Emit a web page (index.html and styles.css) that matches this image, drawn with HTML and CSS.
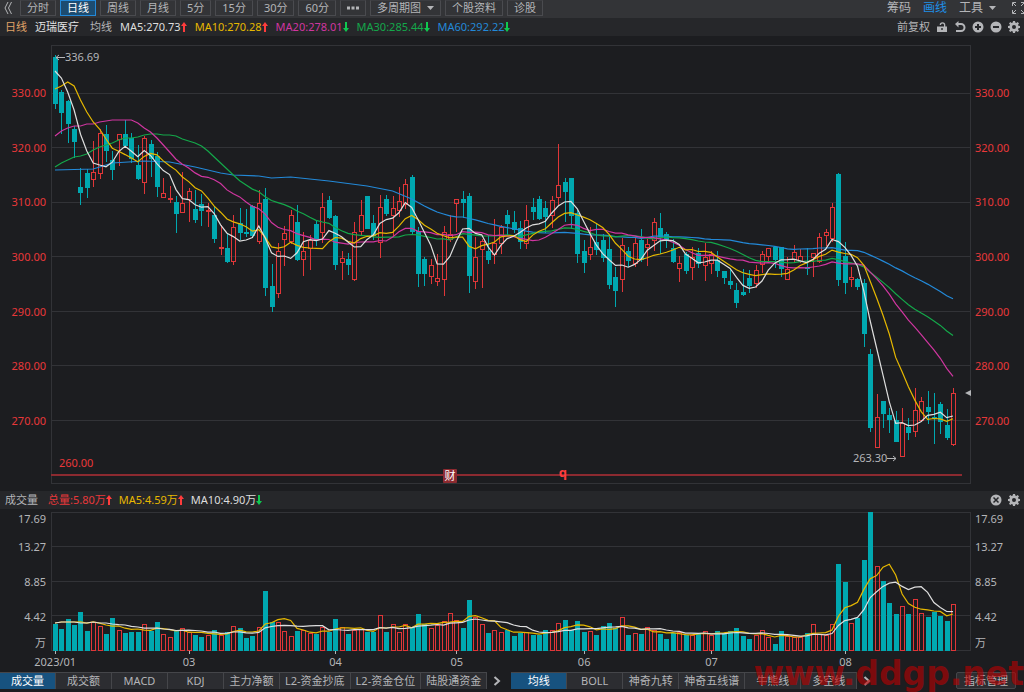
FILE: index.html
```html
<!DOCTYPE html>
<html lang="zh-CN">
<head>
<meta charset="utf-8">
<meta name="viewport" content="width=device-width, initial-scale=1">
<title>迈瑞医疗 日线</title>
<link rel="stylesheet" href="styles.css">
</head>
<body>
<svg class="defs" aria-hidden="true">
  <symbol id="gear" viewBox="0 0 12 12"><path fill-rule="evenodd" d="M5 0h2l.3 1.6 1 .4L9.700 1.100 11 2.400l-1 1.300.4 1L12 5v2l-1.600.3-.4 1 1 1.400L9.700 11l-1.400-1-1 .4L7 12H5l-.3-1.600-1-.4L2.300 11 1 9.700l1-1.400-.4-1L0 7V5l1.600-.3.4-1L1 2.400 2.300 1.100 3.700 2l1-.4zM6 4a2 2 0 1 0 0 4 2 2 0 0 0 0-4z"/></symbol>
  <symbol id="up" viewBox="0 0 6 10"><path d="M3 0 6 4H4v6H2V4H0z"/></symbol>
  <symbol id="down" viewBox="0 0 6 10"><path d="M3 10 6 6H4V0H2v6H0z"/></symbol>
  <symbol id="next" viewBox="0 0 8 10"><path d="M1.500 1 6 5 1.500 9" fill="none" stroke="currentColor" stroke-width="2"/></symbol>
</svg>

<header class="toolbar">
  <button class="back" aria-label="收起"><svg width="8" height="12" viewBox="0 0 8 12"><path d="M4 0 1 6l3 6M7.500 0l-3 6 3 6" fill="none" stroke="currentColor"/></svg></button>
  <nav class="periods">
    <button>分时</button>
    <button class="active">日线</button>
    <button>周线</button>
    <button>月线</button>
    <button>5分</button>
    <button>15分</button>
    <button>30分</button>
    <button>60分</button>
    <button aria-label="更多"><svg width="12" height="4" viewBox="0 0 12 4"><path d="M0 .5h3v3H0zM4.500.5h3v3h-3zM9 .5h3v3H9z"/></svg></button>
    <button>多周期图<svg class="caret" width="7" height="4" viewBox="0 0 7 4"><path d="M0 0h7L3.500 4z"/></svg></button>
    <button>个股资料</button>
    <button>诊股</button>
  </nav>
  <div class="tools">
    <button>筹码</button>
    <button class="on">画线</button>
    <button>工具<svg class="caret" width="7" height="4" viewBox="0 0 7 4"><path d="M0 0h7L3.500 4z"/></svg></button>
    <button aria-label="全屏"><svg width="12" height="14" viewBox="0 0 12 14"><path d="M.5 5V1.500H4M1 2l3 3M9 1.500h3.500V5M12 2 9 5M.5 9v3.500H4M1 12l3-3M9 12.500h3.500V9M12 12 9 9" fill="none" stroke="currentColor"/></svg></button>
  </div>
</header>

<section class="legend">
  <span class="orange">日线</span>
  <strong>迈瑞医疗</strong>
  <span class="label">均线</span>
  <span class="white">MA5:270.73<svg class="arrow red"><use href="#up"/></svg></span>
  <span class="yellow">MA10:270.28<svg class="arrow red"><use href="#up"/></svg></span>
  <span class="pink">MA20:278.01<svg class="arrow lime"><use href="#down"/></svg></span>
  <span class="green">MA30:285.44<svg class="arrow lime"><use href="#down"/></svg></span>
  <span class="blue">MA60:292.22<svg class="arrow lime"><use href="#down"/></svg></span>
  <div class="actions">
    <button>前复权</button>
    <button aria-label="锁定"><svg width="12" height="12" viewBox="0 0 12 12"><path fill-rule="evenodd" d="M1 5.500h7V4a1.500 1.500 0 0 0-3 0H3.700a2.800 2.800 0 0 1 5.600 0v1.500H11V11H1zM5.300 7v2h1.400V7z"/></svg></button>
    <button aria-label="撤销"><svg width="12" height="12" viewBox="0 0 12 12"><path d="M4.500 0v2H7a4.500 4.500 0 0 1 0 9H2V9h5a2.500 2.500 0 0 0 0-5H4.500v2.500L1 3z"/></svg></button>
    <button aria-label="放大"><svg width="12" height="12" viewBox="0 0 12 12"><circle cx="6" cy="6" r="5.500"/><path class="cut" d="M6 3v6M3 6h6"/></svg></button>
    <button aria-label="缩小"><svg width="12" height="12" viewBox="0 0 12 12"><circle cx="6" cy="6" r="5.500"/><path class="cut" d="M3 6h6"/></svg></button>
    <button aria-label="设置"><svg width="12" height="12"><use href="#gear"/></svg></button>
  </div>
</section>

<main class="chart price">
  <ol class="axis left">
    <li>330.00</li><li>320.00</li><li>310.00</li><li>300.00</li><li>290.00</li><li>280.00</li><li>270.00</li>
  </ol>
  <div class="plot">
    <svg id="price" viewBox="51 45 920 439" preserveAspectRatio="none" role="img" aria-label="日K线图"></svg>
    <span class="mark high"><svg width="10" height="7" viewBox="0 0 10 7"><path d="M10 3.500H1M4 1 1 3.500 4 6" fill="none" stroke="currentColor"/></svg>336.69</span>
    <span class="mark low">263.30<svg width="10" height="7" viewBox="0 0 10 7"><path d="M0 3.500h9M6 1l3 2.500L6 6" fill="none" stroke="currentColor"/></svg></span>
    <span class="mark base">260.00</span>
    <span class="mark report">财</span>
    <span class="mark event">q</span>
    <svg class="mark last" width="6" height="6" viewBox="0 0 6 6"><path d="M6 0v6L0 3z"/></svg>
  </div>
  <ol class="axis right">
    <li>330.00</li><li>320.00</li><li>310.00</li><li>300.00</li><li>290.00</li><li>280.00</li><li>270.00</li>
  </ol>
</main>

<section class="legend volume-legend">
  <span class="label">成交量</span>
  <span class="red">总量:5.80万<svg class="arrow red"><use href="#up"/></svg></span>
  <span class="yellow">MA5:4.59万<svg class="arrow red"><use href="#up"/></svg></span>
  <span class="white">MA10:4.90万<svg class="arrow lime"><use href="#down"/></svg></span>
  <div class="actions">
    <button aria-label="关闭"><svg width="12" height="12" viewBox="0 0 12 12"><circle cx="6" cy="6" r="5.500"/><path class="cut thin" d="m3.500 3.500 5 5M8.500 3.500l-5 5"/></svg></button>
    <button aria-label="设置"><svg width="12" height="12"><use href="#gear"/></svg></button>
  </div>
</section>

<section class="chart volume">
  <ol class="axis left"><li>17.69</li><li>13.27</li><li>8.85</li><li>4.42</li><li>万</li></ol>
  <div class="plot"><svg id="volume" viewBox="51 512 920 139" preserveAspectRatio="none" role="img" aria-label="成交量"></svg></div>
  <ol class="axis right"><li>17.69</li><li>13.27</li><li>8.85</li><li>4.42</li><li>万</li></ol>
</section>
<div class="dates" id="dates"></div>

<footer class="tabs">
  <nav class="group">
    <button class="active">成交量</button>
    <button>成交额</button>
    <button>MACD</button>
    <button>KDJ</button>
    <button>主力净额</button>
    <button>L2-资金抄底</button>
    <button>L2-资金仓位</button>
    <button>陆股通资金</button>
  </nav>
  <button class="more" aria-label="更多副图指标"><svg width="8" height="10"><use href="#next"/></svg></button>
  <nav class="group">
    <button class="active">均线</button>
    <button>BOLL</button>
    <button>神奇九转</button>
    <button>神奇五线谱</button>
    <button>牛熊线</button>
    <button>多空线</button>
  </nav>
  <button class="more" aria-label="更多主图指标"><svg width="8" height="10"><use href="#next"/></svg></button>
  <button class="manage">指标管理</button>
</footer>
<div class="watermark">www.ddgp.net</div>
<script src="chart.js"></script>
</body>
</html>
```

FILE: styles.css
```css
* { box-sizing: border-box; }

body {
  margin: 0;
  height: 100vh;
  min-height: 480px;
  display: flex;
  flex-direction: column;
  position: relative;
  overflow: hidden;
  background: #1c1d20;
  color: #b4b5b8;
  font: 11px/16px "Noto Sans", "Noto Sans CJK SC", sans-serif;
}

button {
  margin: 0;
  padding: 0;
  border: 0;
  background: none;
  color: inherit;
  font: inherit;
  white-space: nowrap;
  display: flex;
  align-items: center;
  justify-content: center;
}

svg { display: block; fill: currentColor; flex: none; }
.defs { position: absolute; width: 0; height: 0; }

.toolbar {
  flex: none;
  height: 18px;
  display: flex;
  align-items: flex-start;
  background: #333437;
}
.back { width: 16px; height: 16px; }
.periods { display: flex; gap: 4px; padding-left: 4px; }
.periods button {
  height: 16px;
  padding: 0 6px;
  border: 1px solid #4a4b4f;
  border-top-color: #3c3d41;
}
.periods .active { background: #1d4c70; border-color: #2389d8; color: #fff; }
.caret { margin-left: 6px; }
.tools { margin-left: auto; display: flex; gap: 12px; font-size: 12px; }
.tools button { height: 16px; }
.tools .on { color: #1e90e8; }
.tools button:last-child { margin-left: 4px; }

.legend {
  flex: none;
  height: 18px;
  display: flex;
  align-items: center;
  gap: 8px;
  padding: 0 4px 0 5px;
  background: #26272a;
  white-space: nowrap;
}
.legend > span { display: flex; align-items: center; }
.legend strong { font-weight: 400; color: #e4e4e6; }
.legend strong + .label { margin-left: 3px; }
.arrow { width: 6px; height: 10px; }
.actions { margin-left: auto; display: flex; gap: 6px; }
.cut { fill: none; stroke: #26272a; stroke-width: 2; }
.thin { stroke-width: 1.5; }
.volume-legend { gap: 7px; }
.volume-legend .label { margin-right: 3px; }

.orange { color: #e0a468; }
.white { color: #dedede; }
.yellow { color: #e6b800; }
.pink { color: #d036a0; }
.green { color: #14a84a; }
.blue { color: #2389d8; }
.red { color: #e8383a; }
.arrow.red { color: #ff3c3c; }
.lime { color: #10c850; }

.chart {
  display: grid;
  grid-template-columns: 51px minmax(0, 1fr) 53px;
  min-height: 0;
}
.price { flex: 439 1 0; margin: 9px 0 7px; }
.volume { flex: 139 1 0; margin-top: 3px; }
.plot { position: relative; min-height: 0; }
.plot > svg:first-child { width: 100%; height: 100%; }

.axis { margin: 0; padding: 0; list-style: none; display: grid; min-height: 0; }
.axis li { display: flex; align-items: center; min-height: 0; }
.left li { justify-content: flex-end; padding-right: 5px; }
.right li { padding-left: 4px; }
.price .axis { grid-template-rows: 21fr repeat(7, 55fr) 36fr; color: #e8383a; }
.price .axis::before { content: ""; }
.volume .axis { grid-template-rows: 17fr 35fr 35fr 35fr 17fr; }
.volume .axis li:first-child { align-items: flex-start; line-height: 14px; }

#price *, #volume * { vector-effect: non-scaling-stroke; }
.grid { stroke: #323337; fill: none; shape-rendering: crispEdges; }
.rise { stroke: #e03638; fill: none; shape-rendering: crispEdges; }
.fall { stroke: #00a8b0; fill: #00a8b0; shape-rendering: crispEdges; }
.baseline { stroke: #8c2a30; stroke-width: 2; }
.line { fill: none; stroke: currentColor; stroke-width: 1.2; }

.mark { position: absolute; display: flex; align-items: center; line-height: 14px; }
.high { left: 4px; top: 1.200%; }
.low { right: 8%; top: 92.500%; }
.base { left: 8px; top: 93.600%; color: #e8383a; }
.report {
  left: 42.600%;
  top: 96.600%;
  width: 14px;
  justify-content: center;
  background: #8c2a30;
  color: #fff;
  border-radius: 1px;
}
.event { left: 55.200%; top: 95.600%; color: #ff3c3c; font-size: 13px; font-weight: 700; }
.last { right: 0; top: 78.500%; }

.dates {
  flex: none;
  height: 21px;
  display: grid;
  padding: 0 67px 0 52px;
}
.dates span { display: flex; flex-direction: column; align-items: center; min-width: 0; white-space: nowrap; }
.dates span::before { content: ""; width: 1px; height: 3px; flex: none; background: #b4b5b8; }

.tabs {
  flex: none;
  height: 17px;
  margin-bottom: 3px;
  display: flex;
  background: #1c1d20;
}
.tabs button { height: 17px; }
.group { display: flex; border-top: 1px solid #45464a; }
.group button {
  min-width: 56px;
  height: 16px;
  padding: 0 5px;
  background: #2c2d31;
  border-right: 1px solid #45464a;
}
.group .active { background: #17527f; color: #fff; }
.tabs .more { width: 24px; padding-right: 4px; }
.tabs .manage {
  margin: 0 8px 0 auto;
  padding: 0 7px;
  background: #2c2d31;
  border: 1px solid #45464a;
  border-radius: 2px;
}

.watermark {
  position: absolute;
  right: 0;
  bottom: 0;
  color: rgba(190, 0, 0, .6);
  font: 700 33px/36px "DejaVu Sans", sans-serif;
  pointer-events: none;
}
```

FILE: chart.js
```js
// Each session: direction (1 = rise, 0 = fall), high, body top, body bottom, low, volume top.
const sessions = [
  [0,55,57,103,108,624],[0,90,92,112,133,629],[0,100,101,123,142,619],[0,126,129,141,157,625],
  [0,168,187,192,204,612],[0,169,173,187,197,631],[1,141,172,179,186,622],[1,129,133,173,178,626],
  [0,125,134,150,161,634],[0,151,160,169,179,618],[1,134,134,139,165,630],[0,120,134,145,147,633],
  [0,133,138,158,162,632],[0,145,165,178,179,632],[1,136,138,182,193,624],[0,140,144,158,176,631],
  [0,152,156,186,196,622],[1,178,193,197,197,634],[1,186,198,199,202,637],[0,196,202,213,232,630],
  [1,172,203,212,212,628],[1,188,191,199,221,632],[0,190,209,219,222,635],[0,194,204,210,225,637],
  [1,203,210,211,226,635],[0,207,215,238,242,630],[1,225,247,248,254,635],[0,233,248,261,262,632],
  [1,215,227,261,264,626],[0,208,223,232,239,628],[0,209,232,233,236,638],[0,205,206,235,237,636],
  [1,190,203,241,243,627],[0,188,199,287,295,591],[0,264,286,306,311,622],[1,243,251,293,297,622],
  [1,226,233,239,265,631],[1,210,215,241,243,636],[0,205,222,259,260,631],[1,232,251,259,275,630],
  [1,235,240,248,269,633],[0,220,224,238,245,634],[1,193,207,232,242,627],[0,196,200,217,218,632],
  [0,215,216,264,269,619],[1,251,258,262,279,627],[0,253,259,264,274,634],[1,222,232,279,280,630],
  [1,200,215,231,235,629],[0,196,196,228,228,632],[0,215,223,235,239,632],[1,195,207,242,257,615],
  [0,195,199,213,215,632],[1,196,208,215,235,624],[1,187,201,210,216,632],[1,179,184,204,208,624],
  [0,175,177,231,234,627],[0,227,231,273,286,614],[0,257,259,273,285,624],[1,259,265,276,283,628],
  [1,254,278,281,285,625],[1,226,232,279,295,621],[1,215,234,239,241,613],[1,199,199,203,231,620],
  [0,191,199,202,217,628],[0,193,196,275,292,600],[1,237,257,281,288,617],[1,239,241,249,287,624],
  [0,235,251,259,263,633],[1,219,243,254,263,630],[1,225,227,243,253,632],[0,210,215,223,234,630],
  [0,211,222,229,232,636],[0,221,228,241,248,633],[1,205,220,243,248,632],[0,198,207,211,219,635],
  [0,196,199,218,219,635],[0,201,208,216,232,630],[1,196,200,215,227,630],[1,144,185,197,204,623],
  [0,178,182,191,221,620],[0,178,178,215,228,630],[0,210,213,253,262,621],[0,240,251,262,272,632],
  [1,227,247,254,259,631],[0,224,242,249,254,635],[0,234,240,257,261,626],[0,237,249,284,288,623],
  [0,267,277,290,306,628],[1,238,245,279,291,617],[0,247,251,260,266,635],[1,238,243,263,266,633],
  [0,229,240,259,261,634],[1,239,244,247,265,627],[1,218,222,240,250,630],[0,213,228,236,253,634],
  [0,232,234,240,247,639],[0,239,248,261,262,633],[1,256,263,268,281,632],[0,252,254,270,273,635],
  [1,247,257,267,279,635],[0,248,253,263,267,634],[1,243,257,265,280,631],[1,251,254,263,273,635],
  [0,251,260,270,276,631],[0,271,271,277,283,633],[0,269,281,284,288,631],[0,283,290,302,307,628],
  [0,269,292,294,295,636],[0,270,278,285,292,639],[1,265,270,283,287,635],[1,251,254,264,272,630],
  [1,248,248,256,261,637],[0,246,247,259,267,644],[0,247,247,268,276,631],[1,257,269,279,279,636],
  [1,245,252,259,262,637],[1,249,256,261,262,637],[0,248,267,268,274,633],[1,253,253,257,276,624],
  [1,233,237,261,262,634],[1,229,232,235,245,635],[1,203,207,238,241,624],[0,173,174,279,285,564],
  [0,242,256,282,293,582],[1,267,277,279,286,623],[0,278,279,286,289,618],[0,279,283,333,346,560],
  [0,349,354,427,431,511],[1,394,417,447,447,566],[0,401,401,413,427,581],[0,408,415,419,432,603],
  [0,411,420,441,441,614],[1,408,423,456,456,606],[0,418,427,432,439,614],[1,388,410,431,436,599],
  [1,397,401,420,421,613],[0,391,407,411,423,617],[0,393,417,418,443,612],[0,402,404,421,433,616],
  [0,409,425,437,439,621],[1,388,393,444,445,604]
];

// Averages that start before the visible range: [session index, value].
const averages = [
  { days: 60, color: 'blue', head: [[0,170],[6,169],[9,163],[14,161],[18,162],[22,167],[26,173],[28,175],[32,176],[34,178],[37,177],[43,181],[49,186],[53,191],[56,199],[58,206]] },
  { days: 30, color: 'green', head: [167,163,160,157,156,154,150,147,145,143,140,138,138,137,135,134,134,135,135,136,139,141,143,146,151,157,163,169,175].map((y, i) => [i, y]) },
  { days: 20, color: 'pink', head: [136,131,128,126,126,124,124,122,121,120,120,120,120,123,128,132,138,145,152].map((y, i) => [i, y]) },
  { days: 10, color: 'yellow', head: [89,86,82,86,100,112,122,129,139].map((y, i) => [i, y]) },
  { days: 5, color: 'white', head: [71,78,92,110].map((y, i) => [i, y]) }
];
const volumeAverages = [
  { days: 5, color: 'yellow', head: [623,622,622,622].map((y, i) => [i, y]) },
  { days: 10, color: 'white', head: [623,622,622,622,623,623,622,623,623].map((y, i) => [i, y]) }
];

const LEFT = 51, RIGHT = 971, FIRST = 55, STEP = 6.369;
const xAt = i => FIRST + STEP * i;

function draw(svg, tag, attrs) {
  const el = document.createElementNS('http://www.w3.org/2000/svg', tag);
  for (const key in attrs) el.setAttribute(key, attrs[key]);
  svg.appendChild(el);
}

function drawAverage(svg, { days, color, head }, values) {
  const points = head.slice();
  for (let i = days - 1; i < values.length; i++) {
    const span = values.slice(i - days + 1, i + 1);
    points.push([i, span.reduce((a, b) => a + b, 0) / days]);
  }
  draw(svg, 'polyline', {
    class: 'line ' + color,
    points: points.map(([i, y]) => xAt(i).toFixed(1) + ',' + y.toFixed(1)).join(' ')
  });
}

function drawGrid(svg, top, bottom, lines) {
  const d = lines.map(y => `M${LEFT} ${y}H${RIGHT}`).join('');
  draw(svg, 'path', { class: 'grid', d: `${d}M${LEFT + .5} ${top + .5}H${RIGHT - .5}V${bottom - .5}H${LEFT + .5}Z` });
}

const price = document.getElementById('price');
const volume = document.getElementById('volume');
drawGrid(price, 45, 484, [93.5, 147.5, 202.5, 256.5, 311.5, 365.5, 420.5]);
drawGrid(volume, 512, 651, [546.5, 581.5, 615.5]);
draw(price, 'path', { class: 'baseline', d: 'M51 475H962' });

sessions.forEach(([rise, high, top, bottom, low, vol], i) => {
  const x = Math.round(xAt(i)) + .5;
  const kind = rise ? 'rise' : 'fall';
  draw(price, 'path', { class: kind, d: `M${x} ${high}V${top}M${x} ${bottom}V${low + 1}` });
  draw(price, 'rect', { class: kind, x: x - 2, y: top + .5, width: 4, height: Math.max(bottom - top, 0.1) });
  draw(volume, 'rect', { class: kind, x: x - 2, y: vol + .5, width: 4, height: 650 - vol });
});

const closes = sessions.map(s => s[0] ? s[2] : s[3]);
averages.forEach(a => drawAverage(price, a, closes));
volumeAverages.forEach(a => drawAverage(volume, a, sessions.map(s => s[5])));

const dates = document.getElementById('dates');
dates.style.gridTemplateColumns = `repeat(${sessions.length}, minmax(0, 1fr))`;
[['2023/01', 0], ['03', 21], ['04', 44], ['05', 63], ['06', 83], ['07', 103], ['08', 124]].forEach(([text, i]) => {
  const label = document.createElement('span');
  label.textContent = text;
  label.style.gridColumn = i + 1;
  dates.appendChild(label);
});
```
